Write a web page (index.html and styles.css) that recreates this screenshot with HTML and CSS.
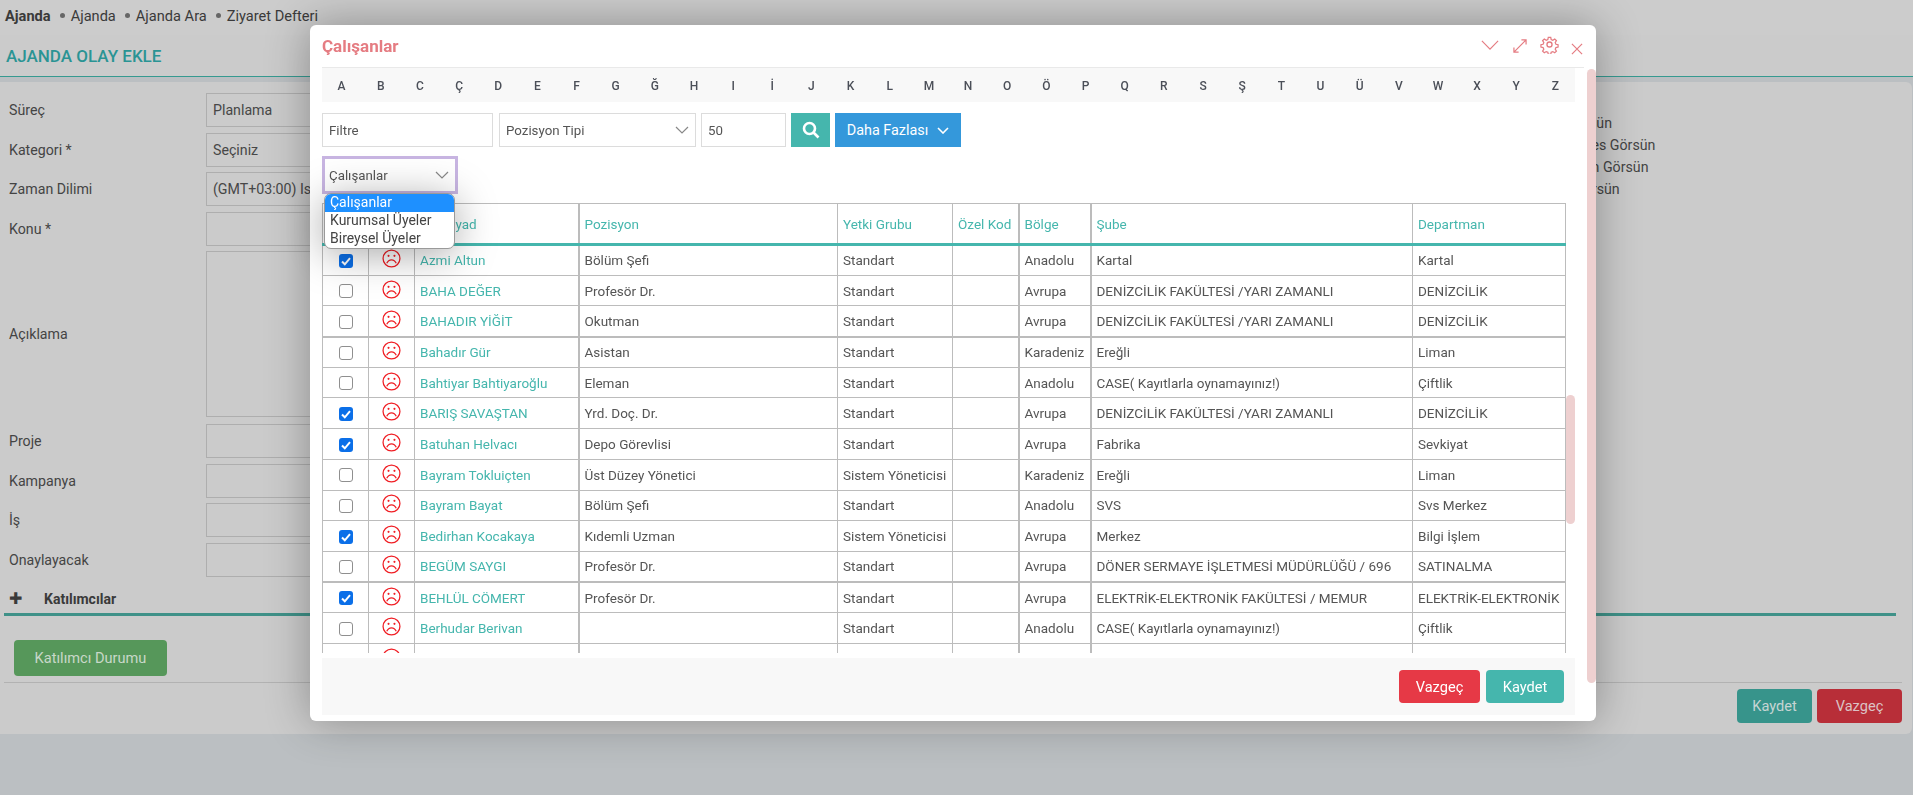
FILE: index.html
```html
<!DOCTYPE html>
<html>
<head>
    <title>Ajanda Olay Ekle</title>
    <meta charset="UTF-8">
    <link rel="stylesheet" href="styles.css">
</head>
<body>
    <nav class="topnav">
        <b>Ajanda</b>
        <span class="crumb">Ajanda</span>
        <span class="crumb">Ajanda Ara</span>
        <span class="crumb">Ziyaret Defteri</span>
    </nav>
    <header class="pagehead"><h1>AJANDA OLAY EKLE</h1></header>
    <main class="panel">
        <div class="formgrid">
            <div class="formcol">
                <div class="frow"><label>Süreç</label><div class="field">Planlama</div></div>
                <div class="frow"><label>Kategori *</label><div class="field">Seçiniz</div></div>
                <div class="frow"><label>Zaman Dilimi</label><div class="field">(GMT+03:00) Istanbul</div></div>
                <div class="frow"><label>Konu *</label><div class="field"></div></div>
                <div class="frow tall"><label>Açıklama</label><div class="field"></div></div>
                <div class="frow"><label>Proje</label><div class="field"></div></div>
                <div class="frow"><label>Kampanya</label><div class="field"></div></div>
                <div class="frow"><label>İş</label><div class="field"></div></div>
                <div class="frow"><label>Onaylayacak</label><div class="field"></div></div>
            </div>
            <div class="showcol">
                <div class="show r1">Kişiler Görsün</div>
                <div class="show r2">Herkes Görsün</div>
                <div class="show r3">Katılımcıların Görsün</div>
                <div class="show r4">Müdürler Görsün</div>
            </div>
        </div>
        <div class="tabhead"><span class="plus">✚</span><b>Katılımcılar</b></div>
        <button class="btn green">Katılımcı Durumu</button>
        <div class="pagefoot">
            <button class="btn dteal">Kaydet</button>
            <button class="btn dred">Vazgeç</button>
        </div>
    </main>

    <div class="modal">
        <div class="modalhead">
            <h2>Çalışanlar</h2>
            <div class="tools">
                <svg class="ic-down" width="18" height="10" viewBox="0 0 20 11"><path d="M1 1l9 9 9-9"/></svg>
                <svg class="ic-exp" width="14" height="14" viewBox="0 0 15 15"><path d="M9 1h5v5M14 1L1 14M1 9v5h5"/></svg>
                <svg class="ic-gear" width="19" height="19" viewBox="0 0 24 24"><circle cx="12" cy="12" r="3.2"/><path d="M10.3 2h3.4l.6 3 2.3 1 2.6-1.700 2.400 2.400-1.700 2.600 1 2.300 3 .6v0 3.400l-3 .6-1 2.300 1.700 2.600-2.400 2.400-2.600-1.700-2.300 1-.6 3h-3.400l-.6-3-2.300-1-2.600 1.700-2.400-2.400 1.700-2.600-1-2.300-3-.6v-3.400l3-.6 1-2.300-1.700-2.600 2.400-2.400 2.600 1.700 2.300-1z" transform="translate(1.100 1.100) scale(.91)"/></svg>
                <svg class="ic-close" width="12" height="12" viewBox="0 0 13 13"><path d="M1 1l11 11M12 1L1 12"/></svg>
            </div>
        </div>
        <div class="letters">
            <span>A</span><span>B</span><span>C</span><span>Ç</span><span>D</span><span>E</span><span>F</span><span>G</span>
            <span>Ğ</span><span>H</span><span>I</span><span>İ</span><span>J</span><span>K</span><span>L</span><span>M</span>
            <span>N</span><span>O</span><span>Ö</span><span>P</span><span>Q</span><span>R</span><span>S</span><span>Ş</span>
            <span>T</span><span>U</span><span>Ü</span><span>V</span><span>W</span><span>X</span><span>Y</span><span>Z</span>
        </div>
        <div class="filters">
            <div class="inp w-filter">Filtre</div>
            <div class="inp w-type">Pozisyon Tipi<svg class="chev" width="14" height="8" viewBox="0 0 14 8"><path d="M1 1l6 6 6-6"/></svg></div>
            <div class="inp w-count">50</div>
            <button class="sbtn"><svg width="18" height="18" viewBox="0 0 18 18"><circle cx="7.500" cy="7.500" r="5.500"/><path d="M11.500 11.500l5 5"/></svg></button>
            <button class="more">Daha Fazlası<svg class="chev" width="12" height="7" viewBox="0 0 12 7"><path d="M1 1l5 5 5-5"/></svg></button>
        </div>
        <div class="typesel">Çalışanlar<svg class="chev" width="14" height="8" viewBox="0 0 14 8"><path d="M1 1l6 6 6-6"/></svg></div>
        <div class="dropdown">
            <div class="opt active">Çalışanlar</div>
            <div class="opt">Kurumsal Üyeler</div>
            <div class="opt">Bireysel Üyeler</div>
        </div>
        <div class="tablewrap">
            <table>
                <colgroup>
                    <col class="c1"><col class="c2"><col class="c3"><col class="c4"><col class="c5"><col class="c6"><col class="c7"><col class="c8"><col class="c9">
                </colgroup>
                <thead>
                    <tr><th></th><th></th><th>Ad Soyad</th><th>Pozisyon</th><th>Yetki Grubu</th><th>Özel Kod</th><th>Bölge</th><th>Şube</th><th>Departman</th></tr>
                </thead>
                <tbody id="rows"></tbody>
            </table>
        </div>
        <div class="thumb-inner"></div>
        <div class="thumb-outer"></div>
        <div class="modalfoot">
            <button class="btn fred">Vazgeç</button>
            <button class="btn fteal">Kaydet</button>
        </div>
    </div>
    <script>
        var data = [
            [1, "Azmi Altun", "Bölüm Şefi", "Standart", "Anadolu", "Kartal", "Kartal"],
            [0, "BAHA DEĞER", "Profesör Dr.", "Standart", "Avrupa", "DENİZCİLİK FAKÜLTESİ /YARI ZAMANLI", "DENİZCİLİK"],
            [0, "BAHADIR YİĞİT", "Okutman", "Standart", "Avrupa", "DENİZCİLİK FAKÜLTESİ /YARI ZAMANLI", "DENİZCİLİK"],
            [0, "Bahadır Gür", "Asistan", "Standart", "Karadeniz", "Ereğli", "Liman"],
            [0, "Bahtiyar Bahtiyaroğlu", "Eleman", "Standart", "Anadolu", "CASE( Kayıtlarla oynamayınız!)", "Çiftlik"],
            [1, "BARIŞ SAVAŞTAN", "Yrd. Doç. Dr.", "Standart", "Avrupa", "DENİZCİLİK FAKÜLTESİ /YARI ZAMANLI", "DENİZCİLİK"],
            [1, "Batuhan Helvacı", "Depo Görevlisi", "Standart", "Avrupa", "Fabrika", "Sevkiyat"],
            [0, "Bayram Tokluiçten", "Üst Düzey Yönetici", "Sistem Yöneticisi", "Karadeniz", "Ereğli", "Liman"],
            [0, "Bayram Bayat", "Bölüm Şefi", "Standart", "Anadolu", "SVS", "Svs Merkez"],
            [1, "Bedirhan Kocakaya", "Kıdemli Uzman", "Sistem Yöneticisi", "Avrupa", "Merkez", "Bilgi İşlem"],
            [0, "BEGÜM SAYGI", "Profesör Dr.", "Standart", "Avrupa", "DÖNER SERMAYE İŞLETMESİ MÜDÜRLÜĞÜ / 696", "SATINALMA"],
            [1, "BEHLÜL CÖMERT", "Profesör Dr.", "Standart", "Avrupa", "ELEKTRİK-ELEKTRONİK FAKÜLTESİ / MEMUR", "ELEKTRİK-ELEKTRONİK"],
            [0, "Berhudar Berivan", "", "Standart", "Anadolu", "CASE( Kayıtlarla oynamayınız!)", "Çiftlik"],
            [0, "", "Öğretim Görevlisi", "", "", "", ""]
        ];
        var sad = '<svg class="sad" width="19" height="19" viewBox="0 0 18 18"><circle cx="9" cy="9" r="8"/><circle class="eye" cx="6.200" cy="6.500" r="1"/><circle class="eye" cx="11.800" cy="6.500" r="1"/><path d="M4.500 13.500c1-2.200 2.600-3.300 4.500-3.300s3.500 1.100 4.500 3.300"/></svg>';
        var html = "";
        data.forEach(function (r) {
            html += '<tr><td class="mid"><span class="cb' + (r[0] ? ' on' : '') + '">' + (r[0] ? '<svg width="14" height="14" viewBox="0 0 14 14"><path d="M3 7.500l2.800 2.800L11 4.200"/></svg>' : '') + '</span></td>' +
                '<td class="mid">' + sad + '</td><td class="name">' + r[1] + '</td>';
            for (var i = 2; i < 7; i++) {
                html += '<td>' + r[i] + '</td>';
                if (i == 3) html += '<td></td>';
            }
            html += '</tr>';
        });
        document.getElementById("rows").innerHTML = html;
    </script>
</body>
</html>
```

FILE: styles.css
```css
* {
    box-sizing: border-box;
}

html, body {
    margin: 0;
    height: 795px;
    overflow: hidden;
}

body {
    font-family: Roboto, "Liberation Sans", sans-serif;
    font-size: 13px;
    color: #474747;
    background-color: #bbbfc2;
}

button {
    font-family: inherit;
    border: none;
    cursor: pointer;
}

.topnav {
    height: 35px;
    background-color: #cccccc;
    padding: 0 0 4px 5px;
    display: flex;
    align-items: center;
    color: #3a3a3a;
    font-size: 14.600px;
}

.crumb {
    margin-left: 9px;
}

.crumb::before {
    content: "";
    display: inline-block;
    width: 5px;
    height: 5px;
    border-radius: 50%;
    background-color: #666;
    margin-right: 6px;
    vertical-align: 3px;
}

.pagehead {
    height: 42px;
    background-color: #cbcbcb;
    border-bottom: 1px solid #369a90;
    padding-left: 6px;
    display: flex;
    align-items: center;
}

h1 {
    margin: 0;
    font-size: 17px;
    font-weight: 500;
    color: #2a9494;
}

.panel {
    margin: 5px 1px 0 0;
    height: 652px;
    background-color: #cbcbcb;
    border-radius: 0 6px 6px 0;
    padding: 11px 10px 0 4px;
    position: relative;
}

.formgrid {
    display: flex;
    height: 482px;
}

.formcol {
    width: 1000px;
    display: flex;
    flex-direction: column;
}

.frow {
    display: flex;
    flex-shrink: 0;
    height: 34px;
    margin-bottom: 5.500px;
    align-items: center;
    padding-left: 5px;
}

.frow.tall {
    height: 166px;
    margin-bottom: 7px;
}

.frow label {
    width: 197px;
    font-size: 14.200px;
    color: #444;
}

.field {
    width: 400px;
    height: 100%;
    border: 1px solid #aeaeae;
    padding: 0 6px;
    font-size: 14.200px;
    display: flex;
    align-items: center;
}

.showcol {
    margin-left: 500px;
    padding-top: 22px;
    font-size: 14.200px;
    color: #444;
}

.show {
    height: 22px;
    white-space: nowrap;
}

.r1 {
    padding-left: 20px;
}

.r2 {
    padding-left: 58px;
}

.r3 {
    padding-left: 13px;
}

.r4 {
    padding-left: 10px;
}

.tabhead {
    height: 41px;
    margin-right: 6px;
    border-bottom: 3px solid #3f9188;
    display: flex;
    align-items: center;
    padding: 9px 0 0 5px;
    font-size: 14px;
    color: #3a3a3a;
}

.plus {
    width: 35px;
    font-size: 16px;
}

.btn {
    border-radius: 4px;
    font-size: 14.600px;
    color: #fff;
}

.green {
    display: block;
    margin: 24px 0 0 10px;
    width: 153px;
    height: 36px;
    background-color: #56975a;
    color: #c8d8c8;
}

.pagefoot {
    margin-top: 6px;
    border-top: 1px solid #b2b2b2;
    padding-top: 6px;
    display: flex;
    justify-content: flex-end;
    gap: 5px;
}

.dteal {
    width: 75px;
    height: 34px;
    background-color: #37948b;
    color: #c6d4d3;
}

.dred {
    width: 85px;
    height: 34px;
    background-color: #b82e38;
    color: #dcc2c4;
}

.modal {
    position: fixed;
    left: 310px;
    top: 25px;
    width: 1286px;
    height: 696px;
    background-color: #fff;
    border-radius: 6px;
    box-shadow: 0 0 45px rgba(0, 0, 0, 0.32);
    padding: 0 12px;
}

.modalhead {
    height: 43px;
    width: 1262px;
    border-bottom: 1px solid #e9e9e9;
    display: flex;
    align-items: center;
    justify-content: space-between;
}

h2 {
    margin: 0;
    font-size: 17px;
    font-weight: 700;
    color: #e57c82;
}

.tools {
    display: flex;
    align-items: center;
    margin-right: 1px;
}

.tools svg {
    fill: none;
    stroke: #e57c82;
    stroke-width: 1.300;
}

.ic-down {
    margin: 0 14px 2px 0;
}

.ic-exp {
    margin: 0 13px 0 0;
}

.tools .ic-gear {
    margin: 0 12px 3px 0;
    stroke-width: 1.700;
}

.ic-close {
    margin-top: 5px;
}

.letters {
    width: 1253px;
    height: 34px;
    padding-top: 1px;
    background-color: #f8f8f8;
    display: flex;
    align-items: center;
}

.letters span {
    flex: 1;
    text-align: center;
    font-size: 12px;
    font-weight: 500;
    color: #4b4f58;
}

.filters {
    display: flex;
    margin-top: 11px;
    gap: 5px;
}

.inp {
    height: 34px;
    border: 1px solid #dcdcdc;
    padding: 0 6px;
    display: flex;
    align-items: center;
    justify-content: space-between;
    font-size: 13.300px;
    color: #555;
}

.w-filter {
    width: 171px;
    margin-right: 1px;
}

.w-type {
    width: 197px;
}

.w-count {
    width: 85px;
}

.chev {
    fill: none;
    stroke: #888;
    stroke-width: 1.200;
}

.sbtn {
    width: 39px;
    height: 34px;
    background-color: #45b6ad;
    padding: 0;
    display: flex;
    align-items: center;
    justify-content: center;
}

.sbtn svg {
    fill: none;
    stroke: #fff;
    stroke-width: 2.600;
}

.more {
    width: 126px;
    height: 34px;
    background-color: #3498db;
    color: #fff;
    font-size: 14.400px;
    display: flex;
    align-items: center;
    justify-content: center;
    gap: 9px;
    padding: 0;
}

.more .chev {
    stroke: #fff;
    stroke-width: 1.600;
}

.typesel {
    width: 136px;
    height: 38px;
    margin-top: 9px;
    border: 3px solid #c8b5e2;
    padding: 0 6px 0 4px;
    display: flex;
    align-items: center;
    justify-content: space-between;
    font-size: 13.300px;
    color: #555;
}

.dropdown {
    position: absolute;
    left: 14px;
    top: 168px;
    width: 131px;
    height: 56px;
    background-color: #fff;
    border: 1px solid #9a9a9a;
    border-radius: 7px;
    overflow: hidden;
    box-shadow: 0 5px 40px rgba(0, 0, 0, 0.35);
    z-index: 3;
}

.opt {
    height: 18px;
    line-height: 17px;
    padding-left: 5px;
    font-size: 14px;
    color: #444;
}

.opt.active {
    background-color: #1e90ff;
    color: #fff;
}

.tablewrap {
    margin-top: 9px;
    height: 450px;
    width: 1244px;
    overflow: hidden;
}

table {
    width: 1243px;
    border-collapse: collapse;
    table-layout: fixed;
    font-size: 13.500px;
    color: #555;
}

.c1, .c2 { width: 46px; }
.c3 { width: 164px; }
.c4 { width: 259px; }
.c5 { width: 115px; }
.c6 { width: 66px; }
.c7 { width: 72px; }
.c8 { width: 322px; }
.c9 { width: 153px; }

th, td {
    border: 1px solid #bcbcbc;
    padding: 0 5px;
    white-space: nowrap;
    overflow: hidden;
    height: 30.700px;
    text-align: left;
}

th {
    height: 41px;
    font-weight: 400;
    color: #45b6ad;
    border-bottom: 3px solid #45b6ad;
}

th:nth-child(4), td:nth-child(4),
th:nth-child(7), td:nth-child(7),
th:nth-child(8), td:nth-child(8) {
    border-left-width: 2px;
}

tbody tr:nth-child(4) td,
tbody tr:nth-child(12) td {
    border-top-width: 2px;
}

.name {
    color: #45b6ad;
}

.mid {
    text-align: center;
    padding: 0 0 1px;
}

.cb {
    display: inline-block;
    width: 14px;
    height: 14px;
    border: 1.500px solid #8f8f8f;
    border-radius: 3px;
    vertical-align: middle;
    background-color: #fff;
}

.cb.on {
    border: none;
    background-color: #0b6fe8;
}

.cb svg {
    display: block;
    fill: none;
    stroke: #fff;
    stroke-width: 2;
}

.sad {
    display: inline-block;
    vertical-align: middle;
    margin-bottom: 2px;
    fill: none;
    stroke: #f01e24;
    stroke-width: 1.200;
}

.sad .eye {
    fill: #f01e24;
    stroke: none;
}

.thumb-inner {
    position: absolute;
    left: 1256px;
    top: 370px;
    width: 9px;
    height: 129px;
    background-color: #eed0d0;
    border-radius: 5px;
}

.thumb-outer {
    position: absolute;
    left: 1277px;
    top: 44px;
    width: 9px;
    height: 614px;
    background-color: #eed0d0;
    border-radius: 5px;
}

.modalfoot {
    margin-top: 5px;
    width: 1253px;
    height: 57px;
    background-color: #f8f8f8;
    display: flex;
    justify-content: flex-end;
    align-items: center;
    gap: 6px;
    padding-right: 11px;
}

.fred {
    width: 81px;
    height: 33px;
    background-color: #e63946;
}

.fteal {
    width: 78px;
    height: 33px;
    background-color: #45b6ad;
}
```
